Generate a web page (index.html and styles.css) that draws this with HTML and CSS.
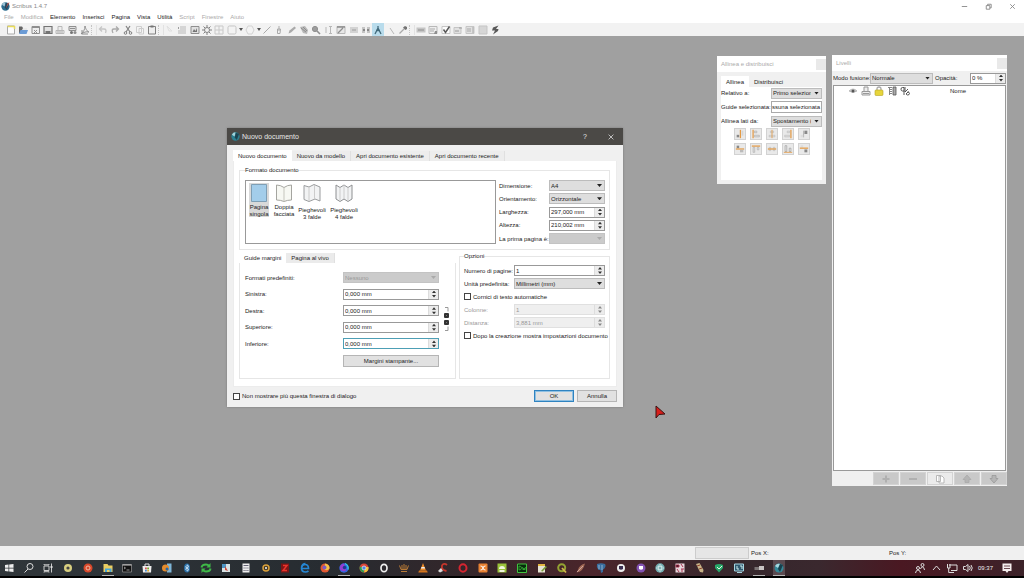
FILE: index.html
```html
<!DOCTYPE html>
<html lang="it">
<head>
<meta charset="utf-8">
<title>Scribus 1.4.7</title>
<link rel="stylesheet" href="styles.css">
</head>
<body>
<div class="app">
  <header class="titlebar">
    <svg class="app-logo" viewBox="0 0 10 10"><circle cx="5" cy="5" r="4.6" fill="#2d6c8e"/><path d="M1 3a4.6 4.6 0 0 1 4-2.600L4 5z" fill="#9cc3d4"/><path d="M5.500 1 9 2 6.500 9 4 6z" fill="#24465c"/><path d="M7.500 1 9.500.5 5.500 7z" fill="#c3564b"/></svg>
    <h1 class="app-title">Scribus 1.4.7</h1>
    <div class="window-controls">
      <button aria-label="Riduci"><svg viewBox="0 0 10 10"><path d="M2 5h6"/></svg></button>
      <button aria-label="Ripristina"><svg viewBox="0 0 10 10"><path d="M2.500 4h4v4h-4zM4 4V2.500h4v4H6.500"/></svg></button>
      <button aria-label="Chiudi"><svg viewBox="0 0 10 10"><path d="m2.500 2.500 5 5m0-5-5 5"/></svg></button>
    </div>
  </header>

  <nav class="menubar">
    <button class="dim">File</button><button class="dim">Modifica</button><button>Elemento</button><button>Inserisci</button><button>Pagina</button><button>Vista</button><button>Utilità</button><button class="dim">Script</button><button class="dim">Finestre</button><button class="dim">Aiuto</button>
  </nav>

  <div class="toolbar">
    <div class="tools tools-7">
      <button aria-label="Nuovo"><svg viewBox="0 0 10 10"><path d="M1.500 1h7v8h-7z" fill="#fff" stroke="#999"/><path d="M1.500 1.500h7M8.500 1v3" stroke="#e6d637" stroke-width="1.500"/></svg></button>
      <button aria-label="Apri"><svg viewBox="0 0 10 10"><path d="M1 1.500h3l1 1.500h3v5H1z" fill="#444"/><path d="M2.500 5H10L8.500 9H1z" fill="#4a86cf"/><path d="M5 3h4v2H4z" fill="#e8e8e8"/></svg></button>
      <button aria-label="Chiudi documento"><svg viewBox="0 0 10 10"><path d="M1 1.500h7.500v7H1z" fill="#eee" stroke="#777"/><path d="M1 2.500h7M3 5l3 3m0-3L3 8" stroke="#777"/></svg></button>
      <button aria-label="Salva"><svg viewBox="0 0 10 10"><path d="M1 1.500h8v7H1z" fill="#ddd" stroke="#555" stroke-width="1.200"/><path d="M2.500 6h5v2.500h-5z" fill="#555"/></svg></button>
      <button aria-label="Stampa"><svg viewBox="0 0 10 10"><path d="M3 5V1.500h4V5M1 5.500h8v3H1z" fill="#eee" stroke="#aaa"/><path d="M2 7h6" stroke="#999"/></svg></button>
      <button aria-label="Verifica"><svg viewBox="0 0 10 10"><path d="M1 1.500h7v4H1z" fill="#ddd" stroke="#777"/><path d="M2 3.500h5" stroke="#777"/><circle cx="3.500" cy="7.500" r="1.500" fill="#555"/><circle cx="7" cy="7.500" r="1.500" fill="#777"/></svg></button>
      <button aria-label="Esporta PDF"><svg viewBox="0 0 10 10"><path d="M5 1c1 4 2 5 4 6-3-.5-5 0-8 2 2-2 4-4 4-8zM2 5v4h6" fill="none" stroke="#777"/></svg></button>
    </div>
    <i class="handle"></i>
    <div class="tools tools-5">
      <button aria-label="Annulla"><svg viewBox="0 0 10 10"><path d="M2 4h4q3 0 1.500 4M4 1.500 1.500 4 4 6.500" fill="none" stroke="#bbb" stroke-width="1.300"/></svg></button>
      <button aria-label="Ripeti"><svg viewBox="0 0 10 10"><path d="M8 4H4Q1 4 3 8M6 1.500 8.500 4 6 6.500" fill="none" stroke="#999" stroke-width="1.300"/></svg></button>
      <button aria-label="Taglia"><svg viewBox="0 0 10 10"><path d="m3 1 4 6M7 1 3 7" stroke="#666" stroke-width="1.200"/><circle cx="2.500" cy="8" r="1.300" fill="none" stroke="#666"/><circle cx="7.500" cy="8" r="1.300" fill="none" stroke="#666"/></svg></button>
      <button aria-label="Copia"><svg viewBox="0 0 10 10"><path d="M1.500 1.500h5v6h-5zM4 3.500h4.500v5.500H4z" fill="#f5f5f5" stroke="#c4c4c4"/></svg></button>
      <button aria-label="Incolla"><svg viewBox="0 0 10 10"><path d="M1.500 1.500h7v7.500h-7z" fill="#eee" stroke="#666"/><path d="M3.500.5h3v2h-3z" fill="#555"/></svg></button>
    </div>
    <i class="handle"></i>
    <div class="tools tools-5">
      <button aria-label="Seleziona"><svg viewBox="0 0 10 10"><path d="m2 1 5 5H4z" fill="none" stroke="#ddd"/></svg></button>
      <button aria-label="Cornice di testo"><svg viewBox="0 0 10 10"><path d="M3 2h6M3 4h6M1 6h8M1 8h8" stroke="#aaa"/><path d="M1 2h1v2H1z" fill="#888"/></svg></button>
      <button aria-label="Cornice immagine"><svg viewBox="0 0 10 10"><path d="M1 1.500h8v7H1z" fill="#ddd" stroke="#777"/><path d="M2.500 7 4 4l1.500 2L7 3v4z" fill="#555"/></svg></button>
      <button aria-label="Cornice di resa"><svg viewBox="0 0 10 10"><circle cx="5" cy="5" r="2.500" fill="none" stroke="#666"/><path d="M5 0v2m0 6v2M0 5h2m6 0h2M1.500 1.500 3 3m4 4 1.500 1.500m0-7L7 3M3 7 1.500 8.500" stroke="#666"/></svg></button>
      <button aria-label="Tabella"><svg viewBox="0 0 10 10"><path d="M1 1h8v8H1zM1 5h8M5 1v8" fill="none" stroke="#c0c0c0"/></svg></button>
    </div>
    <button class="drop" aria-label="Forma"><svg viewBox="0 0 10 10"><rect x="1" y="1" width="8" height="8" rx="1.500" fill="#f4f4f4" stroke="#bbb"/></svg></button>
    <button class="drop" aria-label="Poligono"><svg viewBox="0 0 10 10"><path d="m3 1h4l2 4-2 4H3L1 5z" fill="#f4f4f4" stroke="#ccc"/></svg></button>
    <div class="tools tools-12">
      <button aria-label="Linea"><svg viewBox="0 0 10 10"><path d="M1.500 8.500 8.500 1.500" stroke="#999"/></svg></button>
      <button aria-label="Bézier"><svg viewBox="0 0 10 10"><path d="M5 1v5M3.500 4h3L6 8.500H3.500z" fill="none" stroke="#999"/></svg></button>
      <button aria-label="Mano libera"><svg viewBox="0 0 10 10"><path d="m1.500 8.500 1-3 5-4L9 3 4 7.500z" fill="#999"/></svg></button>
      <button aria-label="Ruota"><svg viewBox="0 0 10 10"><path d="m1 2 5-1 3 4-1 4-4-1z" fill="#aaa"/><path d="m2 3 5 4M4 2l4 4" stroke="#777"/></svg></button>
      <button aria-label="Zoom"><svg viewBox="0 0 10 10"><circle cx="4" cy="4" r="2.600" fill="#888" stroke="#777"/><path d="m6 6 3 3" stroke="#777" stroke-width="1.600"/></svg></button>
      <button aria-label="Modifica testo"><svg viewBox="0 0 10 10"><path d="M2 2v6M6.500 1.500v7M5 1.500h3M5 8.500h3" stroke="#aaa"/></svg></button>
      <button aria-label="Editor"><svg viewBox="0 0 10 10"><path d="M1 1.500h8v7H1z" fill="#e5e5e5" stroke="#aaa"/><path d="m2 8 5-5M1 2h8" stroke="#777" stroke-width="1.300"/></svg></button>
      <button aria-label="Collega cornici"><svg viewBox="0 0 10 10"><path d="M1 2h8v6H1z" fill="#ccc"/><path d="M3 5h4" stroke="#888"/></svg></button>
      <button aria-label="Scollega cornici"><svg viewBox="0 0 10 10"><path d="M1 2h3v6H1zm5 0h3v6H6z" fill="#bbb"/><path d="M2 5h2m2 0h2" stroke="#555" stroke-width="1.500"/></svg></button>
      <button class="active" aria-label="Misure"><svg viewBox="0 0 10 10"><path d="M5 1v2.500M5 3 2 9m3-6 3 6M3 5.500h4" fill="none" stroke="#244e60" stroke-width="1.300"/></svg></button>
      <button aria-label="Copia proprietà"><svg viewBox="0 0 10 10"><path d="m4 3 4 6" stroke="#aaa"/></svg></button>
      <button aria-label="Contagocce"><svg viewBox="0 0 10 10"><path d="m1.500 8.500 5-5" stroke="#999" stroke-width="1.300"/><path d="m5 2.500 2-1.500 2 1v2L7.500 5z" fill="#555"/></svg></button>
    </div>
    <i class="handle"></i>
    <div class="tools tools-7">
      <button aria-label="Pulsante PDF"><svg viewBox="0 0 10 10"><path d="M.5 2.500h9v5h-9z" fill="#bbb"/><path d="M2 5h6" stroke="#777"/></svg></button>
      <button aria-label="Campo testo PDF"><svg viewBox="0 0 10 10"><path d="M1 1.500h8v7H1z" fill="#eee" stroke="#aaa"/><path d="M2 4h5M2 6h4" stroke="#999"/><path d="M7 6h2v3H6z" fill="#777"/></svg></button>
      <button aria-label="Casella PDF"><svg viewBox="0 0 10 10"><path d="M1 1.500h8v7H1z" fill="#fff" stroke="#bbb"/><path d="m2.500 4.500 2 3 4-6" fill="none" stroke="#333" stroke-width="1.500"/></svg></button>
      <button aria-label="Casella combinata PDF"><svg viewBox="0 0 10 10"><path d="M1 2.500h7v6H1z" fill="#ddd" stroke="#bbb"/><path d="M2 6h4M6 3h3" stroke="#888"/></svg></button>
      <button aria-label="Elenco PDF"><svg viewBox="0 0 10 10"><path d="M1 1.500h8v7H1z" fill="#ddd" stroke="#bbb"/><path d="M2 4h4M2 6h4M8 2v6" stroke="#999"/></svg></button>
      <button aria-label="Nota"><svg viewBox="0 0 10 10"><path d="M1 1h8v8H1z" fill="#d0d0d0" stroke="#bbb"/></svg></button>
      <button aria-label="Collegamento"><svg viewBox="0 0 10 10"><path d="M8.500.5 3 2.500 2 5.500h3L3 9.500l5-3.500.5-2H6z" fill="#333"/></svg></button>
    </div>
  </div>

  <main class="workspace">
    <section class="dialog" aria-labelledby="dlg-title">
      <div class="dialog-bar">
        <svg class="app-logo" viewBox="0 0 10 10"><circle cx="5" cy="5" r="4.600" fill="#2b8091"/><path d="M1 3a4.600 4.600 0 0 1 4-2.600L4 5z" fill="#a5d3dc"/><path d="M5.500 1 9 2 6.500 9 4 6z" fill="#1e4350"/></svg>
        <h2 id="dlg-title">Nuovo documento</h2>
        <button aria-label="Aiuto">?</button>
        <button aria-label="Chiudi finestra"><svg viewBox="0 0 10 10"><path d="m2 2 6 6m0-6-6 6"/></svg></button>
      </div>
      <div class="dialog-body">
        <div class="tabs">
          <button class="tab selected">Nuovo documento</button><button class="tab">Nuovo da modello</button><button class="tab">Apri documento esistente</button><button class="tab">Apri documento recente</button>
        </div>
        <div class="page">
          <fieldset class="group format">
            <legend>Formato documento</legend>
            <div class="layouts">
              <button class="layout chosen"><svg viewBox="0 0 18 20"><path d="M1.500 1.500h15v17h-15z" fill="#a3cdea" stroke="#7f9fb5"/></svg><span>Pagina<br>singola</span></button>
              <button class="layout"><svg viewBox="0 0 18 20"><path d="M1.500 2q4 0 7.500 2.500Q12.500 2 16.500 2v15q-4 0-7.500 1.500Q5.500 17 1.500 17z" fill="#f7f8f3" stroke="#a5a5a0"/><path d="M9 4.500v14" stroke="#c5c5bd"/></svg><span>Doppia<br>facciata</span></button>
              <button class="layout fold"><svg viewBox="0 0 18 20"><path d="M1 2.500 6 4l5-2.500L17 4v14l-5-2-6 2.500-5-2z" fill="#f2f3f4" stroke="#9a9c9e"/><path d="M6 4v14m5.500-16v14" stroke="#ccc"/></svg><span>Pieghevoli<br>3 falde</span></button>
              <button class="layout fold"><svg viewBox="0 0 18 20"><path d="m1 2 4 2.500L9 2l4 2.500L17 2v14l-4 2.500L9 16l-4 2.500L1 16z" fill="#f2f3f4" stroke="#8e9092"/><path d="M5 4.500v13M9 2v14m4-11.500v13" stroke="#ccc"/></svg><span>Pieghevoli<br>4 falde</span></button>
            </div>
            <div class="fields size-fields">
              <label for="dim">Dimensione:</label><span class="select"><select id="dim"><option>A4</option></select></span>
              <label for="ori">Orientamento:</label><span class="select"><select id="ori"><option>Orizzontale</option></select></span>
              <label for="lar">Larghezza:</label><span class="spin"><input id="lar" value="297,000 mm"></span>
              <label for="alt">Altezza:</label><span class="spin"><input id="alt" value="210,002 mm"></span>
              <label for="prima">La prima pagina è:</label><span class="select off"><select id="prima" disabled><option></option></select></span>
            </div>
          </fieldset>
          <div class="lower">
            <div class="margins">
              <div class="tabs sub">
                <button class="tab selected">Guide margini</button><button class="tab gray">Pagina al vivo</button>
              </div>
              <div class="margin-pane">
                <div class="fields margin-fields">
                  <label for="pre">Formati predefiniti:</label><span class="select off"><select id="pre" disabled><option>Nessuno</option></select></span>
                  <label for="sin">Sinistra:</label><span class="spin"><input id="sin" value="0,000 mm"></span>
                  <label for="des">Destra:</label><span class="spin"><input id="des" value="0,000 mm"></span>
                  <label for="sup">Superiore:</label><span class="spin"><input id="sup" value="0,000 mm"></span>
                  <label for="inf">Inferiore:</label><span class="spin focus"><input id="inf" value="0,000 mm"></span>
                  <button class="push printer">Margini stampante...</button>
                </div>
                <svg class="chain" viewBox="0 0 6 26"><path d="M1 1.500h3v4M1 24.500h3v-4" fill="none" stroke="#999"/><rect x="0" y="7" width="5" height="5" rx="1" fill="#333"/><rect x="0" y="14" width="5" height="5" rx="1" fill="#333"/><path d="M2 9.500h1m-1 7h1" stroke="#777"/></svg>
              </div>
            </div>
            <fieldset class="group options">
              <legend>Opzioni</legend>
              <div class="fields option-fields">
                <label for="num">Numero di pagine:</label><span class="spin"><input id="num" value="1"></span>
                <label for="uni">Unità predefinita:</label><span class="select"><select id="uni"><option>Millimetri (mm)</option></select></span>
                <label class="check"><input type="checkbox">Cornici di testo automatiche</label>
                <label for="col" class="faint">Colonne:</label><span class="spin off"><input id="col" value="1" disabled></span>
                <label for="dist" class="faint">Distanza:</label><span class="spin off"><input id="dist" value="3,881 mm" disabled></span>
                <label class="check"><input type="checkbox">Dopo la creazione mostra impostazioni documento</label>
              </div>
            </fieldset>
          </div>
        </div>
        <div class="dialog-foot">
          <label class="check"><input type="checkbox">Non mostrare più questa finestra di dialogo</label>
          <button class="push primary">OK</button><button class="push">Annulla</button>
        </div>
      </div>
    </section>

    <section class="palette align">
      <div class="palette-bar"><h2>Allinea e distribuisci</h2><button aria-label="Chiudi Allinea"></button></div>
      <div class="align-body">
        <div class="tabs"><button class="tab selected">Allinea</button><button class="tab bare">Distribuisci</button></div>
        <div class="align-pane">
          <div class="fields align-fields">
            <label for="rel">Relativo a:</label><span class="select"><select id="rel"><option>Primo seleziona</option></select></span>
            <label for="gui">Guide selezionata:</label><input id="gui" class="plain" value="ssuna selezionata">
            <label for="lat">Allinea lati da:</label><span class="select"><select id="lat"><option>Spostamento (oggetti)</option></select></span>
          </div>
          <div class="align-icons">
            <button aria-label="Lati destri a sinistra"><svg viewBox="0 0 12 12"><path d="M2 7h3v3H2z" fill="#888"/><path d="M6.500 1v10" stroke="#e39a45" stroke-width="1.500"/><path d="M8 2h2v6H8z" fill="#d5d5d5"/></svg></button>
            <button aria-label="Lati sinistri"><svg viewBox="0 0 12 12"><path d="M2.500 1v10" stroke="#e39a45" stroke-width="1.500"/><path d="M4 2.500h3v2H4zM4 7.500h6v2H4z" fill="#ddd" stroke="#aaa" stroke-width=".7"/></svg></button>
            <button aria-label="Centri verticali"><svg viewBox="0 0 12 12"><path d="M4 2.500h4v2H4zM2.500 7.500h7v2h-7z" fill="#ddd" stroke="#bbb" stroke-width=".7"/><path d="M6 1v10" stroke="#e39a45"/></svg></button>
            <button aria-label="Lati destri"><svg viewBox="0 0 12 12"><path d="M9.500 1v10" stroke="#e39a45" stroke-width="1.500"/><path d="M5 2.500h3v2H5zM2 7.500h6v2H2z" fill="#ddd" stroke="#bbb" stroke-width=".7"/></svg></button>
            <button aria-label="Lati sinistri a destra"><svg viewBox="0 0 12 12"><path d="M6.500 2h3.500v4H6.500z" fill="#888"/><path d="M5.500 2v8" stroke="#aaa"/><path d="M2 7h3v3H2z" fill="#ddd"/></svg></button>
            <button aria-label="Lati inferiori in alto"><svg viewBox="0 0 12 12"><path d="M2 2h3v3H2z" fill="#888"/><path d="M1 6h10" stroke="#e39a45" stroke-width="1.500"/><path d="M6 7h4v3H6z" fill="#bbb"/></svg></button>
            <button aria-label="Lati superiori"><svg viewBox="0 0 12 12"><path d="M1 2.500h10" stroke="#e39a45" stroke-width="1.500"/><path d="M2.500 4h2v6h-2zM7.500 4h2v3h-2z" fill="#ddd" stroke="#aaa" stroke-width=".7"/></svg></button>
            <button aria-label="Centri orizzontali"><svg viewBox="0 0 12 12"><path d="M2.500 4h2v4h-2zM7.500 4h2v4h-2z" fill="#ddd" stroke="#bbb" stroke-width=".7"/><path d="M1 6h10" stroke="#e39a45" stroke-width="1.500"/></svg></button>
            <button aria-label="Lati inferiori"><svg viewBox="0 0 12 12"><path d="M2.500 2h2v7h-2zM7.500 5h2v4h-2z" fill="#eee" stroke="#999" stroke-width=".8"/><path d="M1 10h10" stroke="#e39a45"/></svg></button>
            <button aria-label="Lati superiori in basso"><svg viewBox="0 0 12 12"><path d="M2 1.500h3v3H2z" fill="#ddd"/><path d="M1 5h10" stroke="#e39a45" stroke-width="1.500"/><path d="M6.500 6.500H10V10H6.500z" fill="#888"/></svg></button>
          </div>
        </div>
      </div>
    </section>

    <section class="palette layers">
      <div class="palette-bar"><h2>Livelli</h2><button aria-label="Chiudi Livelli"></button></div>
      <div class="blend">
        <label for="mod">Modo fusione:</label><span class="select"><select id="mod"><option>Normale</option></select></span>
        <label for="opa">Opacità:</label><span class="spin"><input id="opa" value="0 %"></span>
      </div>
      <div class="layer-list">
        <table>
          <thead><tr>
            <th class="c-eye"><svg viewBox="0 0 10 10" role="img" aria-label="Visibile"><path d="M1 5q4-4 8 0-4 3-8 0z" fill="#ccc" stroke="#aaa" stroke-width=".7"/><circle cx="5" cy="5" r="1.500" fill="#555"/></svg></th>
            <th><svg viewBox="0 0 10 10" role="img" aria-label="Stampa"><path d="M3 5V1h4v4M1 5.500h8v3.500H1z" fill="#eee" stroke="#999"/><path d="M2 7.500h6" stroke="#999"/></svg></th>
            <th><svg viewBox="0 0 10 10" role="img" aria-label="Bloccato"><path d="M3 5V3q0-2 2-2t2 2v2" fill="none" stroke="#aaa" stroke-width="1.300"/><rect x="1" y="4" width="8" height="5.500" rx="1" fill="#e7d53b" stroke="#b3a226" stroke-width=".6"/></svg></th>
            <th><svg viewBox="0 0 10 10" role="img" aria-label="Scorrimento"><path d="M1 1.500h4M3 3.500h2M3 5.500h2M3 7.500h2M2.500 2v7" stroke="#666" stroke-width=".8"/><path d="M6 1h3v8H6z" fill="#aaa" stroke="#555" stroke-width=".8"/></svg></th>
            <th><svg viewBox="0 0 10 10" role="img" aria-label="Contorno"><path d="M4 5H2.500Q1 5 1 3.200T2.500 1.500H4V9M5 1v5l3-3M8.500 5.500 6 8l1.500 1q2 0 2-1.500t-2-1.500" fill="none" stroke="#444" stroke-width=".9"/></svg></th>
            <th class="c-name">Nome</th>
          </tr></thead>
        </table>
      </div>
      <div class="layer-actions">
        <button aria-label="Aggiungi"><svg viewBox="0 0 10 10"><path d="M5 1.500v7M1.500 5h7" stroke="#b0b0b0" stroke-width="2"/></svg></button>
        <button aria-label="Rimuovi"><svg viewBox="0 0 10 10"><path d="M1 5h8" stroke="#b0b0b0" stroke-width="2"/></svg></button>
        <button class="lit" aria-label="Duplica"><svg viewBox="0 0 10 10"><path d="M1.500 1.500h4v6h-4zM4 2h3l2 2v5H4z" fill="#fff" stroke="#aaa" stroke-width=".8"/></svg></button>
        <button aria-label="Alza"><svg viewBox="0 0 10 10"><path d="m5 1 4 4.500H7V8.500H3V5.500H1z" fill="#b5b5b5" stroke="#aaa" stroke-width=".8"/></svg></button>
        <button aria-label="Abbassa"><svg viewBox="0 0 10 10"><path d="m5 9 4-4.500H7V1.500H3V4.500H1z" fill="#b5b5b5" stroke="#999" stroke-width=".8"/></svg></button>
      </div>
    </section>

    <svg class="cursor" viewBox="0 0 11 14"><path d="M1 1v12l3-3.500 6-.5z" fill="#d81e1a" stroke="#3a1212"/></svg>
  </main>

  <footer class="statusbar"><span class="progress"></span><span class="pos-x">Pos X:</span><span>Pos Y:</span></footer>

  <div class="taskbar">
    <div class="apps">
      <button aria-label="Start"><svg viewBox="0 0 12 12"><path d="m2 3 3.500-.5v3.200H2zm4.200-.6L10.500 2v3.700H6.200zM2 6.400h3.500v3.200L2 9.100zm4.200 0h4.300V10l-4.300-.5z" fill="#eee"/></svg></button>
      <button aria-label="Cerca"><svg viewBox="0 0 12 12"><circle cx="7" cy="4.500" r="3" fill="none" stroke="#ddd"/><path d="m5 7-3.500 3.500" stroke="#ddd"/></svg></button>
      <button aria-label="Attività"><svg viewBox="0 0 12 12"><path d="M2 4h5v4.500H2zM2 2v.8h5V2M2 10.500v-.8h5v.8M9.500 1.500v9" fill="none" stroke="#ccc"/><path d="M8.500 4h2v2h-2z" fill="#ddd"/></svg></button>
      <button aria-label="Chrome Canary"><svg viewBox="0 0 12 12"><circle cx="6" cy="6" r="4" fill="#d8cf80"/><circle cx="6" cy="6" r="1.600" fill="#444"/></svg></button>
      <button aria-label="Ubuntu"><svg viewBox="0 0 12 12"><circle cx="6" cy="6" r="4.500" fill="#d9482a"/><circle cx="6" cy="6" r="2" fill="none" stroke="#f0b9a6"/></svg></button>
      <button class="open" aria-label="Esplora file"><svg viewBox="0 0 12 12"><path d="M1.500 2h4l1 1.500h4V10h-9z" fill="#e9cd62"/><path d="M3 6.500h6.500V10H7.500V8h-2.500v2H3z" fill="#46a6d8"/></svg></button>
      <button aria-label="Prompt"><svg viewBox="0 0 12 12"><path d="M1.500 2.500h9v7.500h-9z" fill="#111" stroke="#888" stroke-width=".8"/><path d="M1.500 3h9" stroke="#ccc"/><path d="m3 5 1.500 1L3 7m2.500 1h3" fill="none" stroke="#ccc" stroke-width=".7"/></svg></button>
      <button aria-label="Store"><svg viewBox="0 0 12 12"><path d="M4 4V2h4v2" fill="none" stroke="#ddd"/><path d="M1.500 4h9l-.5 6.500H2z" fill="#eee"/><path d="M4 5.500h1.800v1.800H4z" fill="#d55"/><path d="M6.200 5.500H8v1.800H6.200z" fill="#7a3"/><path d="M4 7.700h1.800v1.800H4z" fill="#48c"/><path d="M6.200 7.700H8v1.800H6.200z" fill="#da3"/></svg></button>
      <button aria-label="Outlook"><svg viewBox="0 0 12 12"><path d="M6 1.500h4.500v9H6z" fill="#7eb6d8"/><circle cx="4.500" cy="6" r="3.500" fill="#e58b2c"/><circle cx="6" cy="7" r="1.500" fill="#2468a8"/></svg></button>
      <button aria-label="Bluetooth"><svg viewBox="0 0 12 12"><ellipse cx="6" cy="6" rx="3" ry="4.500" fill="#286fa8"/><path d="m4 4.500 4 3-2 1.700V2.800l2 1.700-4 3" fill="none" stroke="#d9ecfa" stroke-width=".8"/></svg></button>
      <button aria-label="Sincronizza"><svg viewBox="0 0 12 12"><path d="M1.500 5.500Q2 2.500 6 2.500q2 0 3 1.500M10.500 6.500Q10 9.500 6 9.500q-2 0-3-1.500" fill="none" stroke="#3fba48" stroke-width="2"/><path d="M10.500 1v4.500H6.500zM1.500 11V6.500h4z" fill="#3fba48"/></svg></button>
      <button aria-label="Raccolta"><svg viewBox="0 0 12 12"><path d="M2 2h8v8H2z" fill="#d8e2e4"/><path d="M2 2h4v4H2z" fill="#4e95c4"/><path d="m5 4 3 5-3-1z" fill="#d04838"/></svg></button>
      <button aria-label="Calcolatrice"><svg viewBox="0 0 12 12"><path d="M2.500 1.500h7v9h-7z" fill="#eee"/><path d="M3.500 3.500h5" stroke="#667"/><path d="M3.500 6h5M3.500 8.500h5" stroke="#667" stroke-dasharray="1.200 .7"/></svg></button>
      <button aria-label="Audio"><svg viewBox="0 0 12 12"><circle cx="6" cy="6" r="3" fill="#3a2d18" stroke="#dba13a" stroke-width="1.500"/><circle cx="6" cy="6" r="1.200" fill="#ccc"/></svg></button>
      <button aria-label="FileZilla"><svg viewBox="0 0 12 12"><path d="M2 1.500h8v9H2z" fill="#7d1515"/><path d="M4 3.500h4l-4 5h4" fill="none" stroke="#e8342c" stroke-width="1.500"/></svg></button>
      <button aria-label="Edge"><svg viewBox="0 0 12 12"><path d="M2 6.500h7.500Q9.500 2.500 6 2.500 3 2.500 2.500 6q0 4 4 4 1.500 0 3-1M2.500 5q1-3.500 4-3.500" fill="none" stroke="#2587d4" stroke-width="1.700"/></svg></button>
      <button aria-label="Firefox"><svg viewBox="0 0 12 12"><circle cx="6" cy="6" r="4.500" fill="#e25832"/><path d="M6 1.500q5 1 4.500 5-2 3-5 1z" fill="#f5c247"/><circle cx="5.500" cy="5.500" r="2" fill="#7c5fc4"/></svg></button>
      <button class="open" aria-label="Firefox Developer"><svg viewBox="0 0 12 12"><circle cx="6" cy="6" r="4.700" fill="#3466e0"/><path d="M6 1.500q-5 1-4 6 3 3 6 1z" fill="#963ed0"/><circle cx="6.500" cy="5.500" r="1.700" fill="#1c3a90"/><path d="M7 1.500q4 2 3 6" fill="none" stroke="#2ed0e8" stroke-width="1.200"/></svg></button>
      <button aria-label="Chrome"><svg viewBox="0 0 12 12"><circle cx="6" cy="6" r="4.500" fill="#db4638"/><path d="M1.800 4.500 6 6v4.500a4.500 4.500 0 0 1-4.200-6z" fill="#2f9e50"/><path d="M6 10.500 8 5h2.500A4.500 4.500 0 0 1 6 10.500z" fill="#efc63a"/><circle cx="6" cy="6" r="2" fill="#4b86e6" stroke="#eee" stroke-width=".7"/></svg></button>
      <button aria-label="Opera Developer"><svg viewBox="0 0 12 12"><ellipse cx="6" cy="6" rx="3" ry="3.700" fill="none" stroke="#eee" stroke-width="1.700"/></svg></button>
      <button aria-label="Wamp"><svg viewBox="0 0 12 12"><path d="M1.500 3.500 3 7.500h6l1.500-4M4 3v4m2-5v5m2-4v4M3 9.500h6" fill="none" stroke="#b87a37"/></svg></button>
      <button aria-label="VLC"><svg viewBox="0 0 12 12"><path d="m6 1 3 7.500H3z" fill="#ed8b28"/><path d="M4.500 5h3l.7 1.500H3.800z" fill="#eee"/><path d="M2 8.500h8l.7 2H1.300z" fill="#d5751d"/></svg></button>
      <button aria-label="CCleaner"><svg viewBox="0 0 12 12"><path d="M10 3Q7 .5 5 3.500 4 8 9.500 9" fill="none" stroke="#c4362c" stroke-width="1.800"/><path d="m1 9 3-3 2 3-3 1.500z" fill="#ddd"/></svg></button>
      <button aria-label="Opera"><svg viewBox="0 0 12 12"><ellipse cx="6" cy="6" rx="3.500" ry="3.700" fill="none" stroke="#d52530" stroke-width="2"/></svg></button>
      <button aria-label="XAMPP"><svg viewBox="0 0 12 12"><rect x="1.500" y="1.500" width="9" height="9" rx="1" fill="#e98233"/><path d="M3.500 4q2.500 0 2.500 2t2.500 2M8.500 4Q6 4 6 6T3.500 8" fill="none" stroke="#fff"/></svg></button>
      <button aria-label="Android"><svg viewBox="0 0 12 12"><path d="M1.500 1.500h9v9h-9z" fill="#9bc33a"/><path d="M3 7q0-3 3-3t3 3zM3.500 8h5v2h-5z" fill="#f1f6e0"/></svg></button>
      <button aria-label="Dreamweaver"><svg viewBox="0 0 12 12"><path d="M1.500 2h9v8.500h-9z" fill="#062b0b" stroke="#41c33f"/><path d="M3 4v4q2.500 0 2.500-2T3 4zm3.500 1 .7 3L8 6l.8 2 .7-3" fill="none" stroke="#41c33f" stroke-width=".7"/></svg></button>
      <button aria-label="Note"><svg viewBox="0 0 12 12"><path d="M2 2h7v8.500H2z" fill="#e7e5d4"/><path d="M2 2h7v2H2z" fill="#e2b640"/><path d="m5 9 4.500-5L11 5 6.500 9.500z" fill="#7a9d3a"/></svg></button>
      <button aria-label="QGIS"><svg viewBox="0 0 12 12"><circle cx="5.700" cy="5.700" r="3.500" fill="none" stroke="#93a232" stroke-width="2"/><path d="m6 6 4 4.500" stroke="#d1b84a" stroke-width="1.800"/></svg></button>
      <button aria-label="Piuma"><svg viewBox="0 0 12 12"><path d="M10 1.500Q4 3 3 8l-1.500 2.500Q8 10 10 1.500z" fill="#a26b56"/><path d="M2 10 8 4" stroke="#dbb" stroke-width=".7"/></svg></button>
      <button aria-label="PostgreSQL"><svg viewBox="0 0 12 12"><path d="M2 2q4-1.500 8 0 1.500 2-1 5l-1 .5V10L6 11l-.5-3L3.500 8Q1 5 2 2z" fill="#396d9e"/><path d="M4 3v4m3-4v5" stroke="#b6cee2" stroke-width=".7"/></svg></button>
      <button aria-label="GitHub"><svg viewBox="0 0 12 12"><circle cx="6" cy="6" r="4" fill="#eee"/><path d="M4 4h4v3Q6 8.500 4 7z" fill="#3a2e50"/></svg></button>
      <button aria-label="GitHub Desktop"><svg viewBox="0 0 12 12"><circle cx="6" cy="6" r="4.500" fill="#8352b3"/><path d="M4 4h4v3Q6 8.500 4 7z" fill="#fff"/></svg></button>
      <button aria-label="Atom"><svg viewBox="0 0 12 12"><circle cx="6" cy="6" r="4.700" fill="#74aeb2"/><ellipse cx="6" cy="6" rx="3.500" ry="1.500" fill="none" stroke="#e2f2f2" stroke-width=".7"/><ellipse cx="6" cy="6" rx="1.500" ry="3.500" fill="none" stroke="#e2f2f2" stroke-width=".7"/></svg></button>
      <button aria-label="Immagini"><svg viewBox="0 0 12 12"><path d="M1.500 1.500h9v9h-9z" fill="#e7d6db"/><path d="M2 3h3v2H2zm5-1 2 3M3 7l2 3m2-3h3M8 7v3" stroke="#a93752"/></svg></button>
      <button aria-label="Strumenti"><svg viewBox="0 0 12 12"><path d="m2 2 3.500-1L7 3.500 9.500 8l-.5 2.500L6 10 4.500 7z" fill="#c8b489"/><path d="m3 4 3-1M5 7l3-1" stroke="#8e432e"/></svg></button>
      <button aria-label="Globo"><svg viewBox="0 0 12 12"><path d="M2 3q4-2 8 0v3L6 10.500 2 6z" fill="#28a76a"/><path d="m4 5 2 2 3-3" fill="none" stroke="#e5f3e5"/></svg></button>
      <button aria-label="Monitor"><svg viewBox="0 0 12 12"><path d="M1.500 2h9v7h-9zM4 10.500h5" fill="#315a70" stroke="#a6d5e1"/><path d="M4 4v3h2m1-3h2v3" fill="none" stroke="#cee"/></svg></button>
      <button class="open" aria-label="Registratore"><svg viewBox="0 0 12 12"><path d="M1.500 5h5v3h-5z" fill="#7a7374"/><path d="M6 4h5v4H6z" fill="#c8c4c3"/></svg></button>
      <button class="open current" aria-label="Scribus"><svg viewBox="0 0 12 12"><circle cx="6" cy="6" r="4.500" fill="#358898"/><path d="M2 4q2-3 5-2L5 6z" fill="#a7d8e0"/><path d="m7 2 3 1-3 7-2-3z" fill="#18404d"/></svg></button>
    </div>
    <div class="tray">
      <svg viewBox="0 0 12 12"><circle cx="4" cy="6" r="1.500"/><path d="M1.500 11q.5-3 2.500-3t2.500 3"/><circle cx="8.500" cy="3" r="1.500"/><path d="M6.500 7q.5-2 2-2t2 3"/></svg>
      <svg viewBox="0 0 12 12"><path d="m3 8 3.500-4L10 8"/></svg>
      <svg viewBox="0 0 12 12"><path d="M3 3h8v5.500H5M1.500 2v4H4V2M2.700 6v4.500H8"/></svg>
      <svg viewBox="0 0 12 12"><path d="M1.500 4.500h2L6 2.500v7L3.500 7.500h-2zM7.500 4q1.500 2 0 4M9 3q2.500 3 0 6"/></svg>
      <time>09:37</time>
      <svg class="notes" viewBox="0 0 12 12"><path d="M1.500 1.500h9V9H7.500L6 11 4.500 9h-3z" fill="#f5eeee"/><path d="M3 4h6M3 6.500h6" stroke="#6b4850"/></svg>
    </div>
  </div>
</div>
</body>
</html>
```
FILE: styles.css
```css
* { box-sizing: border-box; }
body { margin: 0; }
button, input, select {
  margin: 0; padding: 0; border: 0; border-radius: 0; background: none;
  font: inherit; color: inherit; min-width: 0; outline: 0;
}
h1, h2 { margin: 0; font: inherit; }
svg { display: block; flex: none; }

.app {
  display: flex; flex-direction: column; height: 100vh; overflow: hidden;
  font: 6px/8px "Liberation Sans", Arial, sans-serif; color: #222; background: #a0a0a0;
}

.titlebar { display: flex; align-items: center; gap: 2px; height: 12px; padding-left: 1px; background: #fff; flex: none; }
.app-logo { width: 9px; height: 9px; }
.app-title { color: #888; flex: 1; }
.window-controls { display: flex; }
.window-controls button { width: 24px; height: 12px; display: grid; place-items: center; }
.window-controls svg { width: 9px; height: 9px; fill: none; stroke: #888; stroke-width: 1; }

.menubar { display: flex; gap: 7px; height: 11px; padding-left: 4px; background: #fff; flex: none; }
.menubar button { height: 10px; }
.menubar .dim { color: #aaa; }

.toolbar { display: flex; align-items: center; height: 13px; padding-left: 5px; background: #f2f2f2; flex: none; }
.tools { display: flex; justify-content: space-between; }
.tools-7 { width: 86px; }
.tools-5 { width: 61px; }
.tools-12 { width: 148px; }
.tools button { width: 12px; height: 13px; display: grid; place-items: center; }
.toolbar svg { width: 10px; height: 10px; opacity: .8; }
.toolbar .active { background: #b9dcec; }
.handle { width: 6px; height: 10px; border-left: 1px dotted #c4c4c4; border-right: 1px solid #e2e2e2; }
.drop { display: flex; align-items: center; gap: 2px; width: 18px; padding-left: 2px; }
.drop::after { content: ""; width: 4px; height: 3px; background: #555; clip-path: polygon(0 0, 100% 0, 50% 100%); }

.workspace { position: relative; flex: 1; min-height: 0; background: #a0a0a0; }

/* form pieces */
.select, .spin { position: relative; display: flex; height: 11px; border: 1px solid #bcbcbc; background: #dedede; }
.select select { appearance: none; width: 100%; padding: 0 10px 0 1px; overflow: hidden; text-overflow: clip; }
.select::after {
  content: ""; position: absolute; right: 2px; top: 3px; width: 5px; height: 3px;
  background: #222; clip-path: polygon(0 0, 100% 0, 50% 100%); pointer-events: none;
}
.select.off { background: #cbcbcb; border-color: #c3c3c3; color: #999; }
.select.off::after { background: #aaa; }
.select select:disabled { opacity: 1; color: #999; }
.spin { background: #fff; border-color: #999; }
.spin input { width: 100%; padding-left: 1px; margin-right: 9px; }
.spin::before { content: ""; position: absolute; right: 0; top: 0; bottom: 0; width: 9px; background: #ececec; border-left: 1px solid #ddd; }
.spin::after {
  content: ""; position: absolute; right: 2px; top: 1px; width: 4px; height: 7px; background: #333;
  clip-path: polygon(50% 0, 100% 36%, 0 36%, 0 64%, 100% 64%, 50% 100%, 0 64%, 0 36%);
}
.spin.focus { border-color: #4d9fb5; }
.spin.off { background: #efefef; border-color: #e0e0e0; color: #999; }
.spin.off::after { background: #888; }
.plain { height: 12px; width: 100%; border: 1px solid #aaa; background: #fff; }
.fields { display: grid; align-items: center; }
.fields label { white-space: nowrap; }
.faint { color: #999; }
.check { display: flex; align-items: center; gap: 2px; white-space: nowrap; }
.check input { appearance: none; width: 7px; height: 7px; border: 1px solid #444; background: #fff; flex: none; }
.push { height: 12px; border: 1px solid #b5b5b5; background: #e1e1e1; }
.push.primary { border: 1px solid #2f83c0; box-shadow: inset 0 0 0 1px #8fc0e2; }

.tabs { display: flex; align-items: flex-end; }
.tab { height: 10px; padding: 0 5px; white-space: nowrap; background: #ededed; border-right: 1px solid #e0e0e0; }
.tab.selected { height: 11px; background: #fff; border-right: 0; }
.tab.gray { background: #ebebeb; }
.tab.bare { background: none; border: 0; }

/* new document dialog */
.dialog { position: absolute; left: 227px; top: 92px; width: 396px; background: #f0f0f0; box-shadow: 0 0 2px #777; }
.dialog-bar { display: flex; align-items: center; gap: 2px; height: 17px; padding-left: 4px; background: #4b4946; color: #e8e8e8; font-size: 7px; }
.dialog-bar h2 { flex: 1; }
.dialog-bar button { width: 24px; height: 17px; display: grid; place-items: center; }
.dialog-bar button svg { width: 8px; height: 8px; stroke: #ddd; }
.dialog-body { padding: 5px 6px; }
.page { padding: 5px 6px 7px 5px; background: #fff; border: 1px solid #ececec; border-top: 0; }
.group { margin: 0; min-width: 0; border: 1px solid #e6e6e6; padding: 0 4px; }
.group legend { padding: 0; line-height: 8px; }
.format { display: flex; gap: 3px; padding: 6px 4px 5px 5px; }
.layouts { flex: 1; display: flex; align-items: flex-start; height: 64px; padding: 2px 3px; border: 1px solid #999; background: #fff; }
.layout { width: 20px; height: 34px; line-height: 7px; display: flex; flex-direction: column; align-items: center; gap: 1px; }
.layout + .layout { margin-left: 5px; }
.layout + .fold { width: 28px; gap: 4px; margin-left: 4px; }
.layout svg { width: 18px; height: 20px; }
.chosen { background: #d9d9d9; }
.size-fields { grid-template-columns: 50px 56px; align-content: space-between; }
.lower { display: grid; grid-template-columns: 217px 1fr; gap: 3px; padding-top: 2px; }
.margin-pane { display: flex; gap: 5px; height: 116px; padding: 9px 5px; border: 1px solid #e6e6e6; border-top: 0; }
.margin-fields { grid-template-columns: 98px 96px; height: 95px; align-content: space-between; }
.printer { grid-column: 2; }
.chain { width: 6px; height: 26px; margin-top: 34px; }
.options { height: 127px; }
.option-fields { grid-template-columns: 50px 1fr; grid-auto-rows: 11px; gap: 2px 0; padding-top: 5px; }
.option-fields .check { grid-column: 1 / 3; }
.dialog-foot { display: flex; align-items: center; gap: 3px; padding-top: 3px; }
.dialog-foot .check { flex: 1; }
.dialog-foot .push { width: 40px; }

/* palettes */
.palette { position: absolute; background: #f0f0f0; }
.palette-bar { display: flex; align-items: center; height: 16px; padding-left: 4px; background: #fff; color: #aaa; }
.palette-bar h2 { flex: 1; }
.palette-bar button { width: 10px; height: 11px; background: #e9e9e9; }
.align { left: 717px; top: 20px; width: 109px; }
.align-body { padding: 4px; }
.align-pane { height: 93px; background: #fff; }
.align-fields { grid-template-columns: 50px 1fr; row-gap: 2px; grid-auto-rows: 12px; overflow: hidden; }
.align-icons { display: grid; grid-template-columns: repeat(5, 12px); gap: 3px 4px; justify-content: center; padding-top: 1px; }
.align-icons button { width: 12px; height: 12px; background: #e9e9e9; border: 1px solid #d2d2d2; }
.align-icons svg { width: 10px; height: 10px; }
.layers { left: 832px; top: 19px; width: 175px; display: flex; flex-direction: column; height: 431px; padding-bottom: 1px; }
.layers .palette-bar { flex: none; }
.blend { display: grid; grid-template-columns: 37px 63px 37px 36px; align-items: center; height: 14px; padding-left: 1px; flex: none; white-space: nowrap; }
.blend .select + label { padding-left: 2px; }
.layer-list { flex: 1; margin: 0 1px; border: 1px solid #999; background: #fff; }
.layer-list table { width: 100%; border-collapse: collapse; table-layout: fixed; }
.layer-list th { width: 13px; padding: 0; font-weight: normal; }
.layer-list th svg { width: 10px; height: 10px; margin: 0 auto; }
.layer-list .c-eye { width: 25px; padding-left: 12px; }
.layer-list .c-name { width: auto; }
.layer-actions { display: flex; gap: 1px; justify-content: flex-end; padding: 1px 0 0; flex: none; }
.layer-actions button { width: 26px; height: 13px; display: grid; place-items: center; background: #c9c9c9; border: 1px solid #d3d3d3; }
.layer-actions .lit { background: #ebebeb; }
.layer-actions svg { width: 10px; height: 10px; }

.cursor { position: absolute; left: 655px; top: 369px; width: 11px; height: 14px; }

.statusbar { display: flex; align-items: center; height: 14px; padding-left: 695px; background: #f0f0f0; flex: none; }
.progress { width: 54px; height: 12px; margin-right: 2px; background: #e6e6e6; border: 1px solid #ccc; }
.pos-x { width: 138px; }

.taskbar {
  display: flex; justify-content: space-between; height: 18px; flex: none; border-bottom: 2px solid #000;
  background: linear-gradient(90deg, #30363a, #272c31 32%, #33262a 45%, #4b252b 58%, #35272c 72%, #3a282e 80%, #4a1822 88%, #3c2229);
}
.apps { display: flex; justify-content: space-between; width: 785px; padding-left: 3px; }
.apps button { width: 12px; height: 16px; display: grid; place-items: center; }
.apps svg { width: 12px; height: 12px; }
.apps .open { box-shadow: 0 -1px 0 #b5b5b5 inset; }
.apps .current { background: #5b4a50; }
.tray { display: flex; align-items: center; gap: 4px; padding-right: 11px; color: #eee; }
.tray svg { width: 12px; height: 12px; fill: none; stroke: #ddd; stroke-width: 1; }
.tray time { padding-right: 4px; }
.tray .notes { stroke: none; }
```
